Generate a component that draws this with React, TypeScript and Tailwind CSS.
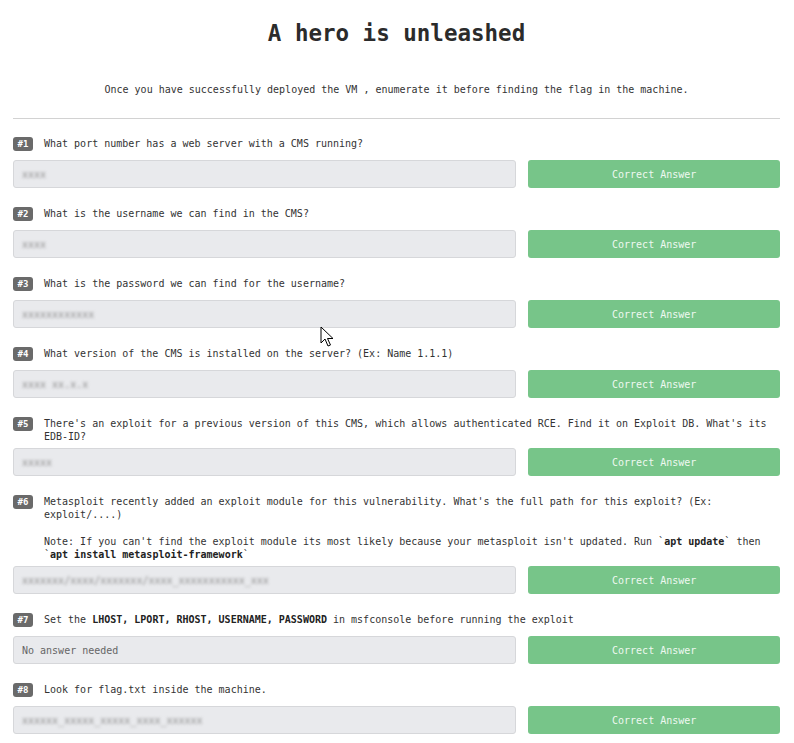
import { ReactNode } from "react";

type Question = {
  id: number;
  text: ReactNode;
  note?: ReactNode;
  answer: string;
  noAnswer?: boolean;
};

const questions: Question[] = [
  { id: 1, text: "What port number has a web server with a CMS running?", answer: "xxxx" },
  { id: 2, text: "What is the username we can find in the CMS?", answer: "xxxx" },
  { id: 3, text: "What is the password we can find for the username?", answer: "xxxxxxxxxxxx" },
  { id: 4, text: "What version of the CMS is installed on the server? (Ex: Name 1.1.1)", answer: "xxxx xx.x.x" },
  {
    id: 5,
    text: "There's an exploit for a previous version of this CMS, which allows authenticated RCE. Find it on Exploit DB. What's its EDB-ID?",
    answer: "xxxxx",
  },
  {
    id: 6,
    text: "Metasploit recently added an exploit module for this vulnerability. What's the full path for this exploit? (Ex: exploit/....)",
    note: (
      <>
        <span>Note: If you can't find the exploit module its most likely because your metasploit isn't updated. Run `</span>
        <b className="text-[#222]">apt update</b>
        <span>` then</span> <span>`</span>
        <b className="text-[#222]">apt install metasploit-framework</b>
        <span>`</span>
      </>
    ),
    answer: "xxxxxxx/xxxx/xxxxxxx/xxxx_xxxxxxxxxxx_xxx",
  },
  {
    id: 7,
    text: (
      <>
        Set the <b className="text-[#222]">LHOST, LPORT, RHOST, USERNAME, PASSWORD</b> in msfconsole before running the exploit
      </>
    ),
    answer: "No answer needed",
    noAnswer: true,
  },
  { id: 8, text: "Look for flag.txt inside the machine.", answer: "xxxxxx_xxxxx_xxxxx_xxxx_xxxxxx" },
];

const QuestionRow = ({ q }: { q: Question }) => {
  return (
    <div>
      <div className="flex items-start gap-[11px] mb-[5px]">
        <div className="h-[18px] shrink-0">
          <span className="flex h-[14px] w-[20px] items-center justify-center rounded-[3px] bg-[#6a6a6a] text-[9px] font-bold leading-none text-white">
            #{q.id}
          </span>
        </div>
        <div className="flex-1 text-[10px] leading-[13px] text-[#333]">
          <p>{q.text}</p>
          {q.note && <p className="mt-[14px]">{q.note}</p>}
        </div>
      </div>
      <div className="grid grid-cols-[2fr_1fr] gap-[12px]">
        <div className="flex h-[28px] items-center rounded-[3px] border border-[#d6d7da] bg-[#e9eaed] px-[8px] text-[10px]">
          {q.noAnswer ? (
            <span className="text-[#666]">{q.answer}</span>
          ) : (
            <span className="text-[#8a8a8a] blur-[1.4px]">{q.answer}</span>
          )}
        </div>
        <button className="h-[28px] rounded-[3px] bg-[#77c589] text-[10px] text-[#eef8f0]">
          Correct Answer
        </button>
      </div>
    </div>
  );
};

const App = () => {
  return (
    <div
      className="relative min-h-[743px] bg-white pl-[13px] pr-[14px] pt-[19px]"
      style={{ fontFamily: '"DejaVu Sans Mono", "Liberation Mono", monospace' }}
    >
      <h1 className="text-center text-[22.5px] font-bold leading-[28px] text-[#2b2b2b]">
        A hero is unleashed
      </h1>
      <p className="mt-[36px] text-center text-[10px] leading-[13px] text-[#333]">
        Once you have successfully deployed the VM , enumerate it before finding the flag in the machine.
      </p>
      <div className="mt-[22px] border-t border-[#d2d2d2]" />
      <div className="mt-[18px] flex flex-col gap-[19px]">
        {questions.map((q) => (
          <QuestionRow key={q.id} q={q} />
        ))}
      </div>

      {/* mouse pointer captured in the screenshot */}
      <svg className="absolute left-[320px] top-[326px]" width="14" height="22" viewBox="0 0 14 22">
        <path d="M1 1 L1 17 L5 13 L8 20 L10.5 19 L7.5 12.5 L13 12.5 Z" fill="white" stroke="black" strokeWidth="1" strokeLinejoin="round" />
      </svg>
    </div>
  );
};

export default App;
